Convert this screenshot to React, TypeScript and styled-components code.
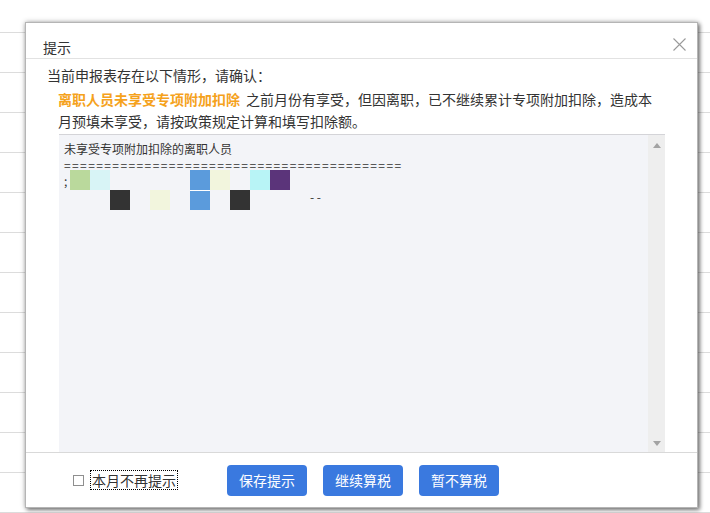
import React from 'react';
import styled, { createGlobalStyle } from 'styled-components';

const GlobalStyle = createGlobalStyle`
  html, body {
    margin: 0;
    padding: 0;
    background: #fff;
  }
  body {
    font-family: "Noto Sans CJK SC", "Liberation Sans", sans-serif;
    color: #333;
  }
`;

type Cell = { col: number; row: number; color: string };

// redaction mosaic over the names in the result box
const mosaic: Cell[] = [
    { col: 0, row: 0, color: '#bad99c' },
    { col: 1, row: 0, color: '#d8f4f6' },
    { col: 6, row: 0, color: '#5b9bdc' },
    { col: 7, row: 0, color: '#f2f5dd' },
    { col: 9, row: 0, color: '#b8f4f6' },
    { col: 10, row: 0, color: '#5b347a' },
    { col: 2, row: 1, color: '#333333' },
    { col: 4, row: 1, color: '#f2f5dd' },
    { col: 6, row: 1, color: '#5b9bdc' },
    { col: 8, row: 1, color: '#333333' },
];

const buttons = ['保存提示', '继续算税', '暂不算税'];

const App: React.FC = () => {
    return (
        <>
            <GlobalStyle />
            <Page>
                <BgTable>
                    {Array.from({ length: 13 }).map((_, i) => (
                        <BgRow key={i} $first={i === 0} />
                    ))}
                </BgTable>

                <Dialog>
                    <Header>
                        <Title>提示</Title>
                        <CloseIcon viewBox="0 0 13 13">
                            <path d="M0.5 0.5 L12.5 12.5 M12.5 0.5 L0.5 12.5" stroke="#9a9a9a" strokeWidth="1.1" fill="none" />
                        </CloseIcon>
                    </Header>

                    <Body>
                        <Intro>当前申报表存在以下情形，请确认：</Intro>
                        <Notice>
                            <Highlight>离职人员未享受专项附加扣除</Highlight>之前月份有享受，但因离职，已不继续累计专项附加扣除，造成本月预填未享受，请按政策规定计算和填写扣除额。
                        </Notice>

                        <ResultBox>
                            <ResultText>
                                <TextLine>未享受专项附加扣除的离职人员</TextLine>
                                <TextLine $wide>{'='.repeat(42)}</TextLine>
                                <TextLine>;</TextLine>
                                <TextLine $indent={246}>- -</TextLine>
                                <Mosaic>
                                    {mosaic.map((c, i) => (
                                        <MosaicCell
                                            key={i}
                                            $split={c.row === 1 && c.col === 6}
                                            style={{ gridColumn: c.col + 1, gridRow: c.row + 1, background: c.color }}
                                        />
                                    ))}
                                </Mosaic>
                            </ResultText>
                            <Scrollbar>
                                <Arrow $dir="up" />
                                <Arrow $dir="down" />
                            </Scrollbar>
                        </ResultBox>
                    </Body>

                    <Footer>
                        <CheckBox />
                        <CheckLabel>本月不再提示</CheckLabel>
                        <ButtonGroup>
                            {buttons.map((b) => (
                                <ActionButton key={b}>{b}</ActionButton>
                            ))}
                        </ButtonGroup>
                    </Footer>
                </Dialog>
            </Page>
        </>
    );
};

const Page = styled.div`
    position: relative;
    width: 710px;
    height: 513px;
    overflow: hidden;
    background: #fff;
`;

const BgTable = styled.div`
    display: flex;
    flex-direction: column;
`;

const BgRow = styled.div<{ $first?: boolean }>`
    height: ${({ $first }) => ($first ? 33 : 40)}px;
    box-sizing: border-box;
    border-bottom: 1px solid #dcdcdc;
    flex-shrink: 0;
`;

const Dialog = styled.div`
    position: absolute;
    left: 25px;
    top: 22px;
    width: 673px;
    height: 486px;
    box-sizing: border-box;
    display: flex;
    flex-direction: column;
    background: #fff;
    border: 1px solid #b5b5b5;
    box-shadow: 2px 2px 4px rgba(0, 0, 0, 0.45), 0 0 5px rgba(0, 0, 0, 0.3);
`;

const Header = styled.div`
    height: 36px;
    box-sizing: border-box;
    flex-shrink: 0;
    display: flex;
    justify-content: space-between;
    align-items: flex-start;
    padding: 14px 11px 0 17px;
    border-bottom: 1px solid #e2e2e2;
`;

const Title = styled.div`
    font-size: 14px;
    line-height: 20px;
    color: #333;
`;

const CloseIcon = styled.svg`
    width: 13px;
    height: 13px;
    margin-top: 1px;
`;

const Body = styled.div`
    flex: 1;
    min-height: 0;
    display: flex;
    flex-direction: column;
    padding: 5px 0 0 21px;
`;

const Intro = styled.div`
    font-size: 14px;
    line-height: 22px;
`;

const Notice = styled.div`
    margin: 2px 0 0 11px;
    width: 600px;
    font-size: 14px;
    line-height: 22px;
`;

const Highlight = styled.span`
    color: #f5a21c;
    font-weight: bold;
    margin-right: 6px;
`;

const ResultBox = styled.div`
    flex: 1;
    min-height: 0;
    margin: 2px 0 0 12px;
    width: 606px;
    display: flex;
    border-top: 1px solid #d4d4d8;
    background: #f3f4f8;
`;

const ResultText = styled.div`
    position: relative;
    flex: 1;
    padding: 6px 5px;
    font-size: 12px;
    line-height: 16px;
    color: #333;
`;

const TextLine = styled.div<{ $indent?: number; $wide?: boolean }>`
    white-space: pre;
    padding-left: ${({ $indent }) => $indent ?? 0}px;
    letter-spacing: ${({ $wide }) => ($wide ? '1.4px' : 'normal')};
`;

const Mosaic = styled.div`
    position: absolute;
    left: 11px;
    top: 35px;
    display: grid;
    grid-template-columns: repeat(11, 20px);
    grid-template-rows: repeat(2, 20px);
`;

const MosaicCell = styled.div<{ $split?: boolean }>`
    width: 20px;
    height: 20px;
    box-shadow: ${({ $split }) => ($split ? 'inset 0 1px 0 #ffffff' : 'none')};
`;

const Scrollbar = styled.div`
    width: 17px;
    flex-shrink: 0;
    display: flex;
    flex-direction: column;
    justify-content: space-between;
    align-items: center;
    padding: 8px 0 6px;
    box-sizing: border-box;
    background: #eeeeee;
`;

const Arrow = styled.div<{ $dir: 'up' | 'down' }>`
    width: 0;
    height: 0;
    border-left: 4px solid transparent;
    border-right: 4px solid transparent;
    ${({ $dir }) =>
        $dir === 'up' ? 'border-bottom: 5px solid #a3a3a3;' : 'border-top: 5px solid #a3a3a3;'}
`;

const Footer = styled.div`
    height: 55px;
    flex-shrink: 0;
    box-sizing: border-box;
    display: flex;
    align-items: center;
    padding-left: 47px;
    border-top: 1px solid #d9d9d9;
`;

const CheckBox = styled.span`
    width: 11px;
    height: 11px;
    box-sizing: border-box;
    border: 1px solid #8f8f8f;
    background: #fff;
    margin-right: 7px;
`;

const CheckLabel = styled.span`
    font-size: 14px;
    line-height: 18px;
    padding: 0 1px;
    outline: 1px dotted #000;
    color: #333;
`;

const ButtonGroup = styled.div`
    display: flex;
    gap: 16px;
    margin-left: 50px;
`;

const ActionButton = styled.button`
    width: 80px;
    height: 31px;
    padding: 0;
    border: none;
    border-radius: 4px;
    background: #3a79df;
    color: #fff;
    font-family: "Noto Sans CJK SC", "Liberation Sans", sans-serif;
    font-size: 14px;
    cursor: pointer;
`;

export default App;
